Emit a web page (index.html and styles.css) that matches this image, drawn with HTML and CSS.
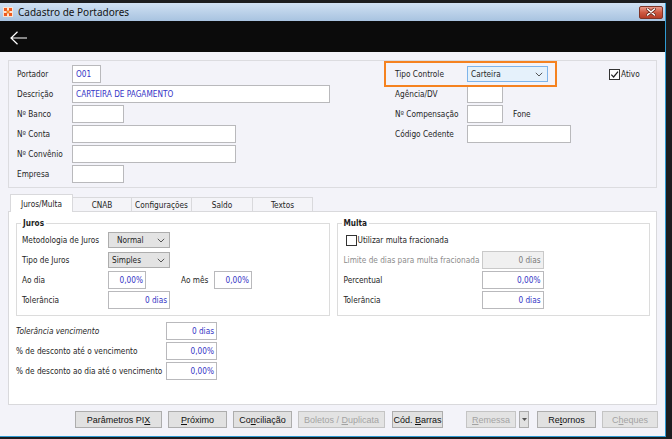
FILE: index.html
```html
<!DOCTYPE html>
<html lang="pt-BR">
<head>
<meta charset="utf-8">
<title>Cadastro de Portadores</title>
<link rel="stylesheet" href="styles.css">
</head>
<body>
<div class="screen">
  <div class="window">
    <div class="titlebar">
      <svg class="app-icon" viewBox="0 0 10 10" width="10" height="10">
        <rect x="0" y="0" width="10" height="10" fill="#fbe3d2"/>
        <rect x="1" y="1" width="3" height="3" fill="#ee5a1f"/>
        <rect x="6" y="1" width="3" height="3" fill="#ee5a1f"/>
        <rect x="3.5" y="3.5" width="3" height="3" fill="#f58a2e"/>
        <rect x="1" y="6" width="3" height="3" fill="#ee5a1f"/>
        <rect x="6" y="6" width="3" height="3" fill="#ee5a1f"/>
      </svg>
      <span class="title">Cadastro de Portadores</span>
      <div class="close">
        <svg viewBox="0 0 10 8" width="10" height="8">
          <path d="M1.5 1 L8.5 7 M8.5 1 L1.5 7" stroke="#6b2a1e" stroke-width="3" stroke-linecap="round"/>
          <path d="M1.5 1 L8.5 7 M8.5 1 L1.5 7" stroke="#ffffff" stroke-width="1.6" stroke-linecap="round"/>
        </svg>
      </div>
    </div>
    <div class="toolbar">
      <svg class="back" viewBox="0 0 18 14" width="18" height="14">
        <path d="M1 7 H17 M7.5 0.8 L1 7 L7.5 13.2" stroke="#ffffff" stroke-width="1.2" fill="none"/>
      </svg>
    </div>

    <div class="content">
      <section class="head">
        <div class="grid-left">
          <span class="lbl">Portador</span><div class="field w29">O01</div>
          <span class="lbl">Descrição</span><div class="field w258">CARTEIRA DE PAGAMENTO</div>
          <span class="lbl">Nº Banco</span><div class="field w52"></div>
          <span class="lbl">Nº Conta</span><div class="field w164"></div>
          <span class="lbl">Nº Convênio</span><div class="field w164"></div>
          <span class="lbl">Empresa</span><div class="field w52"></div>
        </div>
        <div class="grid-right">
          <span class="lbl">Tipo Controle</span>
          <div class="combo combo-blue w81"><span>Carteira</span>
            <svg viewBox="0 0 8 5" width="8" height="5"><path d="M0.8 0.8 L4 4 L7.2 0.8" stroke="#555" fill="none" stroke-width="1"/></svg>
          </div>
          <span class="lbl">Agência/DV</span><div class="field w36"></div>
          <span class="lbl">Nº Compensação</span>
          <div class="inline"><div class="field w36"></div><span class="lbl">Fone</span></div>
          <span class="lbl">Código Cedente</span><div class="field w104"></div>
        </div>
        <label class="check-row ativo">
          <span class="checkbox checked">
            <svg viewBox="0 0 9 9" width="9" height="9"><path d="M1.3 4.6 L3.6 7 L8 1.6" stroke="#222" fill="none" stroke-width="1.2"/></svg>
          </span><span>Ativo</span>
        </label>
        <div class="highlight"></div>
      </section>

      <nav class="tabs">
        <span class="tab active t62">Juros/Multa</span>
        <span class="tab t59">CNAB</span>
        <span class="tab t60">Configurações</span>
        <span class="tab t61">Saldo</span>
        <span class="tab t60">Textos</span>
      </nav>

      <section class="page">
        <div class="groups">
          <div class="group">
            <span class="group-title">Juros</span>
            <div class="juros-grid">
              <span class="lbl">Metodologia de Juros</span>
              <div class="combo combo-gray w62 span3 centered"><span>Normal</span>
                <svg viewBox="0 0 8 5" width="8" height="5"><path d="M0.8 0.8 L4 4 L7.2 0.8" stroke="#555" fill="none" stroke-width="1"/></svg>
              </div>
              <span class="lbl">Tipo de Juros</span>
              <div class="combo combo-gray w62 span3"><span>Simples</span>
                <svg viewBox="0 0 8 5" width="8" height="5"><path d="M0.8 0.8 L4 4 L7.2 0.8" stroke="#555" fill="none" stroke-width="1"/></svg>
              </div>
              <span class="lbl">Ao dia</span>
              <div class="field num w38">0,00%</div>
              <span class="lbl">Ao mês</span>
              <div class="field num w38">0,00%</div>
              <span class="lbl">Tolerância</span>
              <div class="field num w62 span3">0 dias</div>
            </div>
          </div>
          <div class="group">
            <span class="group-title">Multa</span>
            <div class="multa-grid">
              <label class="check-row span2 indent"><span class="checkbox"></span><span>Utilizar multa fracionada</span></label>
              <span class="lbl muted">Limite de dias para multa fracionada</span>
              <div class="field num disabled w62">0 dias</div>
              <span class="lbl">Percentual</span>
              <div class="field num w62">0,00%</div>
              <span class="lbl">Tolerância</span>
              <div class="field num w62">0 dias</div>
            </div>
          </div>
        </div>
        <div class="extra-grid">
          <span class="lbl italic">Tolerância vencimento</span>
          <div class="field num w51">0 dias</div>
          <span class="lbl">% de desconto até o vencimento</span>
          <div class="field num w51">0,00%</div>
          <span class="lbl">% de desconto ao dia até o vencimento</span>
          <div class="field num w51">0,00%</div>
        </div>
      </section>

      <div class="buttons">
        <span class="btn b87"><span>Parâmetros PI<u>X</u></span></span>
        <span class="btn b59"><span><u>P</u>róximo</span></span>
        <span class="btn b59"><span>Co<u>n</u>ciliação</span></span>
        <span class="btn b87 off"><span>Boletos / <u>D</u>uplicata</span></span>
        <span class="btn b51 gap7"><span>Cód. <u>B</u>arras</span></span>
        <span class="btn b50 off gap23"><span><u>R</u>emessa</span></span>
        <span class="btn b10 gap3">
          <svg viewBox="0 0 5 3" width="5" height="3"><path d="M0 0 H5 L2.5 3 Z" fill="#555"/></svg>
        </span>
        <span class="btn b59 gap8"><span>Re<u>t</u>ornos</span></span>
        <span class="btn b56 off"><span>C<u>h</u>eques</span></span>
      </div>
    </div>
  </div>
</div>
</body>
</html>
```

FILE: styles.css
```css
* { box-sizing: border-box; }
html, body { margin: 0; padding: 0; }
body {
  width: 672px;
  height: 439px;
  overflow: hidden;
  background: #1c1d1f;
  font-family: "DejaVu Sans Condensed", "DejaVu Sans", sans-serif;
  font-stretch: condensed;
  font-size: 8.2px;
  color: #1e1e1e;
}
.screen { padding-top: 3px; height: 439px; }
.window {
  width: 666px;
  height: 434px;
  border-right: 1px solid #2f9bd3;
  border-bottom: 1px solid #2f9bd3;
  background: #f3f3f9;
  display: flex;
  flex-direction: column;
}
.titlebar {
  height: 18px;
  flex: none;
  display: flex;
  align-items: center;
  padding-left: 3px;
  background: linear-gradient(#d0e1f3, #a8c3e0);
}
.app-icon { display: block; margin-right: 5px; }
.title {
  flex: 1;
  font-family: "Noto Sans", "Liberation Sans", sans-serif;
  font-stretch: normal;
  font-size: 10px;
  color: #141414;
}
.close {
  width: 24px;
  height: 13px;
  margin-right: 2px;
  border: 1px solid #7e3426;
  border-radius: 2px;
  background: linear-gradient(#e8998a, #cf5a42 50%, #b53c27);
  display: flex;
  align-items: center;
  justify-content: center;
}
.close svg { display: block; }
.toolbar {
  height: 31px;
  flex: none;
  background: #0b0b0b;
  display: flex;
  align-items: center;
  padding: 2px 0 0 10px;
}
.back { display: block; }
.content { flex: 1; padding: 8px 0 0 8px; }

/* head panel */
.head {
  position: relative;
  width: 649px;
  height: 128px;
  border: 1px solid #dcdce0;
  padding: 4px 0 0 8px;
  display: flex;
  align-items: flex-start;
}
.grid-left, .grid-right {
  display: grid;
  grid-auto-rows: 18px;
  row-gap: 2px;
  align-items: center;
  justify-items: start;
}
.grid-left { width: 378px; grid-template-columns: 55px auto; }
.grid-right { width: 214px; grid-template-columns: 72px auto; }
.lbl { white-space: nowrap; }
.muted { color: #8c8c8c; }
.italic { font-style: italic; }
.inline { display: flex; align-items: center; gap: 10px; }

.field {
  height: 18px;
  border: 1px solid #b9b9bc;
  background: #fff;
  color: #3535c6;
  padding: 0 3px;
  display: flex;
  align-items: center;
  white-space: nowrap;
}
.field.num { justify-content: flex-end; padding-right: 2px; }
.field.disabled { background: #f0f0f0; border-color: #c9c9c9; color: #7a7a7a; }
.w29 { width: 29px; }
.w36 { width: 36px; }
.w38 { width: 38px; }
.w51 { width: 51px; }
.w52 { width: 52px; }
.w62 { width: 62px; }
.w81 { width: 81px; }
.w104 { width: 104px; }
.w164 { width: 164px; }
.w258 { width: 258px; }

.combo {
  height: 16px;
  display: flex;
  align-items: center;
  justify-content: space-between;
  padding: 0 4px 0 3px;
}
.combo svg { display: block; }
.combo-blue { background: #e5f1fb; border: 1px solid #7eb4ea; }
.combo-gray { background: #e3e3e3; border: 1px solid #adadad; }
.combo.centered span { padding-left: 5px; }

.check-row { display: flex; align-items: center; height: 18px; white-space: nowrap; }
.checkbox {
  width: 11px;
  height: 11px;
  border: 1px solid #333;
  background: #fff;
  display: flex;
  align-items: center;
  justify-content: center;
  margin-right: 1px;
}
.checkbox svg { display: block; }
.ativo { height: 18px; }

.highlight {
  position: absolute;
  left: 375px;
  top: 0;
  width: 173px;
  height: 26px;
  border: 2px solid #f58220;
  pointer-events: none;
}

/* tabs */
.tabs {
  display: flex;
  align-items: flex-end;
  height: 17px;
  margin-top: 6px;
  padding-left: 2px;
}
.tab {
  height: 14px;
  border: 1px solid #d9d9dc;
  border-bottom: none;
  margin-right: -1px;
  background: #f4f4f8;
  display: flex;
  align-items: center;
  justify-content: center;
  white-space: nowrap;
}
.tab.active {
  height: 18px;
  margin-bottom: -1px;
  background: #fff;
  position: relative;
  z-index: 1;
}
.t59 { width: 60px; }
.t60 { width: 61px; }
.t61 { width: 62px; }
.t62 { width: 63px; }

/* tab page */
.page {
  width: 649px;
  height: 194px;
  background: #fff;
  border: 1px solid #d9d9dc;
  padding: 11px 6px 0 7px;
}
.groups { display: flex; gap: 7px; }
.group {
  position: relative;
  width: 314px;
  height: 93px;
  border: 1px solid #dcdcdc;
  padding: 7px 0 0 5px;
}
.group-title {
  position: absolute;
  top: -7px;
  left: 4px;
  padding: 0 2px;
  background: #fff;
  font-weight: bold;
  line-height: 12px;
}
.juros-grid, .multa-grid, .extra-grid {
  display: grid;
  grid-auto-rows: 18px;
  row-gap: 2px;
  align-items: center;
  justify-items: start;
}
.juros-grid { grid-template-columns: 86px 73px 33px auto; }
.span3 { grid-column: 2 / 5; }
.multa-grid { grid-template-columns: 138px auto; padding-left: 1px; }
.span2 { grid-column: 1 / 3; }
.indent { padding-left: 2px; }
.extra-grid { grid-template-columns: 150px auto; margin-top: 6px; }

/* buttons */
.buttons {
  display: flex;
  gap: 6px;
  margin-top: 6px;
  padding-left: 67px;
}
.btn {
  height: 17px;
  border: 1px solid #adadad;
  background: #e1e1e1;
  display: flex;
  align-items: center;
  justify-content: center;
  font-family: "Liberation Sans", Arial, sans-serif;
  font-stretch: normal;
  font-size: 9px;
  color: #111;
  white-space: nowrap;
}
.btn.off { color: #a3a3a3; border-color: #c4c4c4; background: #e3e3e3; }
.btn svg { display: block; }
.b10 { width: 10px; }
.b50 { width: 50px; }
.b51 { width: 51px; }
.b56 { width: 56px; }
.b59 { width: 59px; }
.b87 { width: 87px; }
.gap3 { margin-left: -3px; }
.gap7 { margin-left: 1px; }
.gap8 { margin-left: 2px; }
.gap23 { margin-left: 17px; }
```
